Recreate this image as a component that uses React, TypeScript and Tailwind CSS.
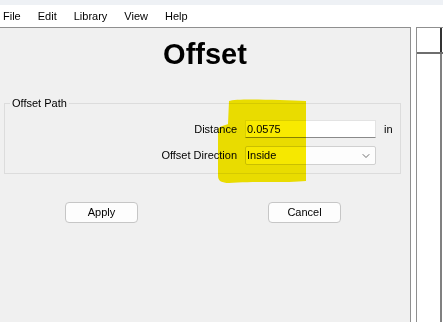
import { ChevronDown } from 'lucide-react';

const menuItems = ['File', 'Edit', 'Library', 'View', 'Help'];

function Highlight() {
  return (
    <svg
      className="pointer-events-none absolute left-0 top-0 mix-blend-multiply"
      width={443}
      height={322}
      viewBox="0 0 443 322"
    >
      <path
        d="M229 101 C236 98 282 100 306 101 L306 181 C288 183 250 181 229 183 C222 183 218 181 218 176 L218 129 C220 126 226 125 228 124 Z"
        fill="#f8ea00"
      />
    </svg>
  );
}

export default function App() {
  return (
    <div className="relative h-[322px] w-[443px] overflow-hidden bg-white font-['Liberation_Sans',Arial,sans-serif] text-[11px] text-black">
      <div className="h-[5px] bg-[#eef1f5]" />

      <nav className="flex h-[22px] items-center gap-[17px] bg-white pl-[3px]">
        {menuItems.map((item) => (
          <span key={item}>{item}</span>
        ))}
      </nav>

      <div className="flex h-[295px]">
        <main className="flex w-[411px] flex-col border-r border-t border-[#8f8f8f] bg-[#f0f0f0]">
          <h1 className="mt-[10px] text-center text-[29px] font-bold leading-[32px]">Offset</h1>

          <fieldset className="ml-[4px] mt-[25px] w-[397px] border border-[#dcdcdc]">
            <legend className="ml-[5px] px-[2px] leading-[16px]">Offset Path</legend>
            <div className="mb-[8px] mt-[9px] grid grid-cols-[232px_131px_auto] items-center gap-x-2 gap-y-2">
              <span className="text-right">Distance</span>
              <div className="flex h-[18px] items-center border border-[#e3e3e3] border-b-[#8a8a8a] bg-white pl-[1px]">
                0.0575
              </div>
              <span>in</span>

              <span className="text-right">Offset Direction</span>
              <div className="flex h-[19px] items-center justify-between rounded-[2px] border border-[#d0d0d0] bg-[#fdfdfd] pl-[1px] pr-[3px]">
                <span>Inside</span>
                <ChevronDown size={12} strokeWidth={1.5} className="text-[#404040]" />
              </div>
              <span />
            </div>
          </fieldset>

          <div className="mt-[28px] flex gap-[130px] pl-[65px]">
            <button className="h-[21px] w-[73px] rounded-[4px] border border-[#c6c6c6] bg-[#fdfdfd]">Apply</button>
            <button className="h-[21px] w-[73px] rounded-[4px] border border-[#c6c6c6] bg-[#fdfdfd]">Cancel</button>
          </div>
        </main>

        <div className="w-[5px]" />

        <aside className="flex flex-1 flex-col border-l border-t border-[#8f8f8f]">
          <div className="flex h-[24px]">
            <div className="flex-1" />
            <div className="w-[2px] bg-[#333333]" />
            <div className="w-[1px]" />
          </div>
          <div className="h-[2px] bg-[#6e6e6e]" />
          <div className="flex flex-1">
            <div className="flex-1" />
            <div className="w-[2px] bg-[#808080]" />
            <div className="w-[1px]" />
          </div>
        </aside>
      </div>

      <Highlight />
    </div>
  );
}
